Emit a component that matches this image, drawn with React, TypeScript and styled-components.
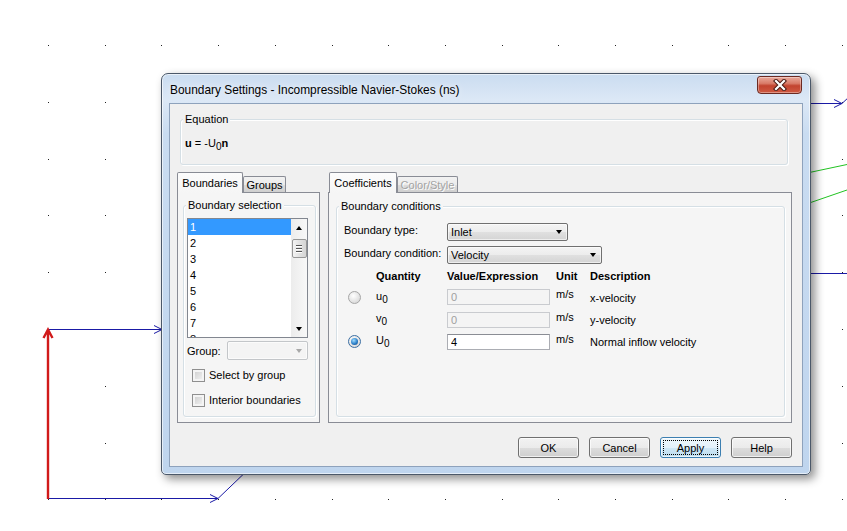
import styled, { createGlobalStyle } from "styled-components";

const GlobalStyle = createGlobalStyle`
  html, body {
    margin: 0;
    padding: 0;
    background: #fff;
  }
  body {
    font-family: "Liberation Sans", Arial, sans-serif;
    font-size: 11px;
    color: #000;
  }
  * {
    box-sizing: border-box;
  }
`;

const Desktop = styled.div`
  position: relative;
  width: 847px;
  height: 531px;
  overflow: hidden;
  background: #fff;
`;

const Drawing = styled.svg`
  position: absolute;
  left: 0;
  top: 0;
`;

const Window = styled.div`
  position: absolute;
  left: 161px;
  top: 73px;
  width: 650px;
  height: 402px;
  display: flex;
  flex-direction: column;
  padding: 0 7px 7px;
  border: 1px solid #4b5869;
  border-radius: 7px 7px 5px 5px;
  background: linear-gradient(to bottom, #cadcf0 0px, #dce8f6 26px, #c9dcf1 60px, #bfd5ee 100%);
  box-shadow: inset 0 0 0 1px rgba(255, 255, 255, 0.6), 4px 4px 10px rgba(0, 0, 0, 0.45);
`;

const TitleBar = styled.div`
  height: 29px;
  display: flex;
  align-items: flex-start;
  justify-content: space-between;
`;

const Title = styled.span`
  margin-top: 9px;
  padding-left: 1px;
  font-size: 11.9px;
  line-height: 14px;
  text-shadow: 0 0 6px rgba(255, 255, 255, 0.9);
`;

const CloseButton = styled.div`
  width: 45px;
  height: 18px;
  margin: 2px 1px 0 0;
  display: flex;
  align-items: center;
  justify-content: center;
  border: 1px solid #6b2a22;
  border-radius: 3px 3px 4px 4px;
  background: linear-gradient(to bottom, #e9aa9c 0%, #d97b68 40%, #c2432f 55%, #cf5a42 100%);
  box-shadow: inset 0 0 0 1px rgba(255, 255, 255, 0.35);
`;

const Client = styled.div`
  flex: 1;
  display: flex;
  flex-direction: column;
  background: #f0f0f0;
  border: 1px solid #8ea2bc;
`;

const GroupBox = styled.div`
  display: flex;
  flex-direction: column;
  border: 1px solid #d5dfe5;
  border-radius: 3px;
  box-shadow: inset 1px 1px 0 #fff, 1px 1px 0 #fff;
`;

const Caption = styled.div<{ $bg?: string }>`
  align-self: flex-start;
  margin: -7px 0 0 2px;
  padding: 0 2px;
  line-height: 13px;
  background: ${(p) => p.$bg ?? "#f0f0f0"};
`;

const EquationBox = styled(GroupBox)`
  margin: 15px 14px 0 10px;
  height: 46px;
`;

const EquationText = styled.div`
  margin: 11px 0 0 4px;
  line-height: 13px;
`;

const Sub = styled.sub`
  font-size: 10px;
  vertical-align: -3px;
  line-height: 0;
`;

const PanelsRow = styled.div`
  display: flex;
  gap: 8px;
  margin: 7px 10px 0 7px;
  height: 251px;
`;

const TabControl = styled.div<{ $w: number }>`
  width: ${(p) => p.$w}px;
  display: flex;
  flex-direction: column;
`;

const TabStrip = styled.div<{ $indent?: number }>`
  height: 20px;
  display: flex;
  align-items: flex-end;
  padding-left: ${(p) => p.$indent ?? 0}px;
`;

const Tab = styled.div<{ $w: number; $active?: boolean; $disabled?: boolean }>`
  position: relative;
  width: ${(p) => p.$w}px;
  height: ${(p) => (p.$active ? 21 : 16)}px;
  margin-bottom: ${(p) => (p.$active ? -1 : 0)}px;
  z-index: ${(p) => (p.$active ? 1 : 0)};
  display: flex;
  justify-content: center;
  padding-top: ${(p) => (p.$active ? 4 : 2)}px;
  line-height: 13px;
  border: 1px solid #898c95;
  border-bottom: none;
  border-radius: 2px 2px 0 0;
  background: ${(p) =>
    p.$active
      ? "linear-gradient(to bottom, #fcfcfc, #f5f5f5)"
      : "linear-gradient(to bottom, #f2f2f2 0%, #ebebeb 50%, #dddddd 51%, #cfcfcf 100%)"};
  color: ${(p) => (p.$disabled ? "#a3a3a3" : "#000")};
  text-shadow: ${(p) => (p.$disabled ? "1px 1px 0 #fff" : "none")};
`;

const TabPage = styled.div<{ $pad: string }>`
  flex: 1;
  display: flex;
  flex-direction: column;
  padding: ${(p) => p.$pad};
  border: 1px solid #898c95;
  background: #f5f5f5;
`;

const PageGroup = styled(GroupBox)`
  flex: 1;
`;

const ListBox = styled.div`
  width: 121px;
  height: 120px;
  margin: 6px 0 0 3px;
  display: flex;
  overflow: hidden;
  border: 1px solid #828790;
  background: #fff;
`;

const ListItems = styled.div`
  flex: 1;
  display: flex;
  flex-direction: column;
`;

const ListItem = styled.div<{ $selected?: boolean }>`
  flex-shrink: 0;
  height: 16px;
  line-height: 16px;
  padding-left: 2px;
  background: ${(p) => (p.$selected ? "#3399ff" : "transparent")};
  color: ${(p) => (p.$selected ? "#fff" : "#000")};
`;

const ScrollBar = styled.div`
  width: 16px;
  display: flex;
  flex-direction: column;
  align-items: center;
  background: linear-gradient(to right, #ececec, #f8f8f8);
`;

const ScrollButton = styled.div`
  height: 17px;
  width: 100%;
  display: flex;
  align-items: center;
  justify-content: center;
`;

const Arrow = styled.span<{ $up?: boolean; $color?: string }>`
  width: 0;
  height: 0;
  border-left: 3.5px solid transparent;
  border-right: 3.5px solid transparent;
  ${(p) =>
    p.$up
      ? `border-bottom: 4px solid ${p.$color ?? "#000"};`
      : `border-top: 4px solid ${p.$color ?? "#000"};`}
`;

const Thumb = styled.div`
  width: 15px;
  height: 19px;
  margin-top: 3px;
  display: flex;
  flex-direction: column;
  align-items: center;
  justify-content: center;
  gap: 2px;
  border: 1px solid #979797;
  border-radius: 2px;
  background: linear-gradient(to right, #f3f3f3, #e2e2e2 50%, #d5d5d5);
`;

const Grip = styled.span`
  width: 6px;
  height: 1px;
  background: #555;
  box-shadow: 0 1px 0 #fff;
`;

const ScrollSpace = styled.div`
  flex: 1;
`;

const GroupRow = styled.div`
  display: flex;
  align-items: center;
  margin: 3px 0 0 3px;
`;

const RowLabel = styled.span<{ $w: number }>`
  width: ${(p) => p.$w}px;
  line-height: 14px;
`;

const Combo = styled.div<{ $w: number; $h?: number; $disabled?: boolean }>`
  width: ${(p) => p.$w}px;
  height: ${(p) => p.$h ?? 18}px;
  display: flex;
  align-items: center;
  justify-content: space-between;
  padding: 0 5px 0 3px;
  border: 1px solid ${(p) => (p.$disabled ? "#c3c6c9" : "#707070")};
  border-radius: 2px;
  background: ${(p) =>
    p.$disabled
      ? "#f4f4f4"
      : "linear-gradient(to bottom, #f4f4f4 0%, #ececec 50%, #e0e0e0 51%, #d4d4d4 100%)"};
  box-shadow: inset 0 0 0 1px rgba(255, 255, 255, 0.6);
`;

const CheckRow = styled.div<{ $top: number }>`
  display: flex;
  align-items: center;
  gap: 4px;
  margin: ${(p) => p.$top}px 0 0 8px;
  line-height: 13px;
`;

const CheckBox = styled.span`
  width: 13px;
  height: 13px;
  border: 1px solid #8f8f8f;
  background: linear-gradient(135deg, #cbcbcb, #f6f6f6);
  box-shadow: inset 0 0 0 2px #f4f4f4;
`;

const FormRow = styled.div<{ $top: number }>`
  display: flex;
  align-items: flex-start;
  margin: ${(p) => p.$top}px 0 0 7px;
`;

const ParamGrid = styled.div`
  display: grid;
  grid-template-columns: 27px 71px 109px 34px auto;
  grid-template-rows: 15px 16px 16px 16px;
  row-gap: 6.3px;
  align-items: center;
  margin: 4px 0 0 12px;
`;

const HeadCell = styled.span`
  align-self: end;
  font-weight: bold;
  line-height: 13px;
`;

const RadioCell = styled.span<{ $checked?: boolean }>`
  width: 13px;
  height: 13px;
  margin-left: -1px;
  display: flex;
  align-items: center;
  justify-content: center;
  border-radius: 50%;
  border: 1px solid ${(p) => (p.$checked ? "#3c6fa3" : "#a6a6a6")};
  background: radial-gradient(circle at 40% 35%, #fff 0%, #e2e2e2 60%, #cfcfcf 100%);
  &::after {
    content: "";
    display: ${(p) => (p.$checked ? "block" : "none")};
    width: 7px;
    height: 7px;
    border-radius: 50%;
    background: radial-gradient(circle at 40% 35%, #9fdcff 0%, #2c80c9 55%, #0e3f78 100%);
  }
`;

const QtyCell = styled.span`
  line-height: 13px;
  margin-top: -2px;
`;

const ValueField = styled.input`
  width: 103px;
  height: 16px;
  margin: 0;
  padding: 0 3px;
  font: inherit;
  font-size: 11px;
  border: 1px solid #abadb3;
  border-top-color: #8a8d94;
  background: #fff;
  color: #000;
  outline: none;
  &:disabled {
    border-color: #c9cbcf;
    background: #f4f4f4;
    color: #a0a0a0;
    -webkit-text-fill-color: #a0a0a0;
    opacity: 1;
  }
`;

const UnitCell = styled.span`
  align-self: start;
  line-height: 13px;
  margin-top: -1px;
`;

const DescCell = styled.span`
  line-height: 13px;
  margin-top: 2px;
`;

const ButtonRow = styled.div`
  display: flex;
  justify-content: flex-end;
  gap: 10px;
  margin: 14px 10px 0 0;
`;

const Button = styled.button<{ $focused?: boolean }>`
  width: 61px;
  height: 21px;
  padding: 0;
  font: inherit;
  font-size: 11px;
  color: #000;
  border: 1px solid ${(p) => (p.$focused ? "#3c7fb1" : "#707070")};
  border-radius: 3px;
  background: ${(p) =>
    p.$focused
      ? "linear-gradient(to bottom, #eef7fc 0%, #e3f1fa 50%, #cfe7f5 51%, #bcdcee 100%)"
      : "linear-gradient(to bottom, #f2f2f2 0%, #ebebeb 50%, #dddddd 51%, #cfcfcf 100%)"};
  box-shadow: inset 0 0 0 1px rgba(255, 255, 255, 0.7);
  outline: ${(p) => (p.$focused ? "1px dotted #000" : "none")};
  outline-offset: -4px;
`;

const DOTS_X = Array.from({ length: 15 }, (_, i) => Math.round(48 + i * 56.7));
const DOTS_Y = Array.from({ length: 9 }, (_, j) => Math.round(45 + j * 56.8));
const ITEMS = ["1", "2", "3", "4", "5", "6", "7", "8"];

function Geometry() {
  const blue = "#1a1aa6";
  return (
    <Drawing width={847} height={531} viewBox="0 0 847 531">
      {DOTS_Y.map((y) =>
        DOTS_X.map((x) => <rect key={`${x}-${y}`} x={x} y={y} width={1} height={1} fill="#222" />)
      )}
      <g fill="none" stroke={blue} strokeWidth={1}>
        <path d="M48 329.5H162M154 325.5L162 329.5L154 333.5" />
        <path d="M48 498.5H218M210 494.5L218 498.5L210 502.5" />
        <path d="M218 498.5L300 420" />
        <path d="M700 103.5H842M834 99.5L842 103.5L834 107.5M842 103.5L850 96" />
        <path d="M700 273.5H847" />
      </g>
      <g fill="none" stroke="#22c322" strokeWidth={1}>
        <path d="M760 183L847 164.5" />
        <path d="M760 220L847 190" />
      </g>
      <path d="M48 499V331M43.5 338L48 329.5L52.5 338" fill="none" stroke="#d11a1a" strokeWidth={2.4} />
    </Drawing>
  );
}

function CloseGlyph() {
  return (
    <svg width={14} height={12} viewBox="0 0 14 12">
      <path d="M3 2L11 10M11 2L3 10" stroke="#4a1a14" strokeWidth={4.2} strokeLinecap="square" />
      <path d="M3 2L11 10M11 2L3 10" stroke="#fff" strokeWidth={2.2} strokeLinecap="square" />
    </svg>
  );
}

export default function App() {
  return (
    <Desktop>
      <GlobalStyle />
      <Geometry />
      <Window>
        <TitleBar>
          <Title>Boundary Settings - Incompressible Navier-Stokes (ns)</Title>
          <CloseButton>
            <CloseGlyph />
          </CloseButton>
        </TitleBar>
        <Client>
          <EquationBox>
            <Caption>Equation</Caption>
            <EquationText>
              <b>u</b> = -U<Sub>0</Sub>
              <b>n</b>
            </EquationText>
          </EquationBox>

          <PanelsRow>
            <TabControl $w={143}>
              <TabStrip>
                <Tab $w={66} $active>
                  Boundaries
                </Tab>
                <Tab $w={43}>Groups</Tab>
              </TabStrip>
              <TabPage $pad="12px 3px 5px 5px">
                <PageGroup>
                  <Caption $bg="#f5f5f5">Boundary selection</Caption>
                  <ListBox>
                    <ListItems>
                      {ITEMS.map((item, i) => (
                        <ListItem key={item} $selected={i === 0}>
                          {item}
                        </ListItem>
                      ))}
                    </ListItems>
                    <ScrollBar>
                      <ScrollButton>
                        <Arrow $up />
                      </ScrollButton>
                      <Thumb>
                        <Grip />
                        <Grip />
                        <Grip />
                      </Thumb>
                      <ScrollSpace />
                      <ScrollButton>
                        <Arrow />
                      </ScrollButton>
                    </ScrollBar>
                  </ListBox>
                  <GroupRow>
                    <RowLabel $w={40}>Group:</RowLabel>
                    <Combo $w={81} $h={19} $disabled>
                      <span />
                      <Arrow $color="#a8a8a8" />
                    </Combo>
                  </GroupRow>
                  <CheckRow $top={9}>
                    <CheckBox />
                    Select by group
                  </CheckRow>
                  <CheckRow $top={12}>
                    <CheckBox />
                    Interior boundaries
                  </CheckRow>
                </PageGroup>
              </TabPage>
            </TabControl>

            <TabControl $w={464}>
              <TabStrip $indent={1}>
                <Tab $w={68} $active>
                  Coefficients
                </Tab>
                <Tab $w={61} $disabled>
                  Color/Style
                </Tab>
              </TabStrip>
              <TabPage $pad="13px 6px 5px 7px">
                <PageGroup>
                  <Caption $bg="#f5f5f5">Boundary conditions</Caption>
                  <FormRow $top={10}>
                    <RowLabel $w={103}>Boundary type:</RowLabel>
                    <Combo $w={121}>
                      Inlet
                      <Arrow />
                    </Combo>
                  </FormRow>
                  <FormRow $top={5}>
                    <RowLabel $w={103}>Boundary condition:</RowLabel>
                    <Combo $w={155}>
                      Velocity
                      <Arrow />
                    </Combo>
                  </FormRow>
                  <ParamGrid>
                    <span />
                    <HeadCell>Quantity</HeadCell>
                    <HeadCell>Value/Expression</HeadCell>
                    <HeadCell>Unit</HeadCell>
                    <HeadCell>Description</HeadCell>

                    <RadioCell />
                    <QtyCell>
                      u<Sub>0</Sub>
                    </QtyCell>
                    <ValueField value="0" disabled readOnly />
                    <UnitCell>m/s</UnitCell>
                    <DescCell>x-velocity</DescCell>

                    <span />
                    <QtyCell>
                      v<Sub>0</Sub>
                    </QtyCell>
                    <ValueField value="0" disabled readOnly />
                    <UnitCell>m/s</UnitCell>
                    <DescCell>y-velocity</DescCell>

                    <RadioCell $checked />
                    <QtyCell>
                      U<Sub>0</Sub>
                    </QtyCell>
                    <ValueField value="4" readOnly />
                    <UnitCell>m/s</UnitCell>
                    <DescCell>Normal inflow velocity</DescCell>
                  </ParamGrid>
                </PageGroup>
              </TabPage>
            </TabControl>
          </PanelsRow>

          <ButtonRow>
            <Button>OK</Button>
            <Button>Cancel</Button>
            <Button $focused>Apply</Button>
            <Button>Help</Button>
          </ButtonRow>
        </Client>
      </Window>
    </Desktop>
  );
}
